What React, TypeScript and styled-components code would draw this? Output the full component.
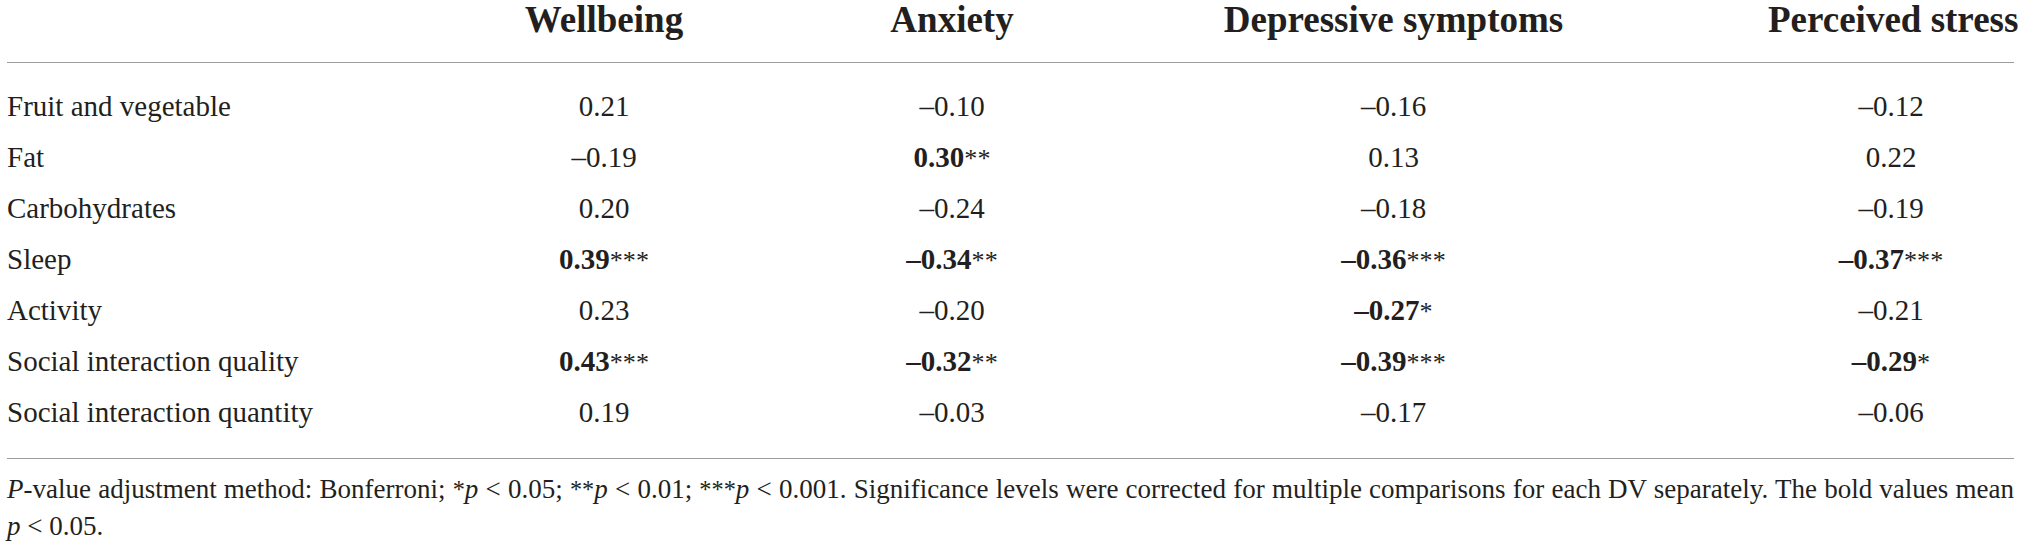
import React from "react";
import styled, { createGlobalStyle } from "styled-components";

const GlobalStyle = createGlobalStyle`
  html, body {
    margin: 0;
    padding: 0;
    background: #ffffff;
  }
`;

const COLUMNS = "316px 562px 134px 749px 246px";

const Page = styled.div`
  width: 2021px;
  box-sizing: border-box;
  padding: 0 7px;
  font-family: "Liberation Serif", "Times New Roman", serif;
  color: #231f20;
`;

const HeaderRow = styled.div`
  display: grid;
  grid-template-columns: ${COLUMNS};
  height: 63px;
  box-sizing: border-box;
  padding-bottom: 24px;
  border-bottom: 1px solid #9d9d9d;
`;

const HeadCell = styled.div<{ $label?: boolean }>`
  font-size: 37px;
  line-height: 39px;
  font-weight: 700;
  text-align: ${(p) => (p.$label ? "left" : "center")};
  white-space: nowrap;
`;

const Body = styled.div`
  padding: 18px 0 20px;
  border-bottom: 1px solid #9d9d9d;
`;

const Row = styled.div`
  display: grid;
  grid-template-columns: ${COLUMNS};
  height: 51px;
`;

const Cell = styled.div<{ $label?: boolean; $bold?: boolean }>`
  font-size: 29px;
  line-height: 51px;
  font-weight: ${(p) => (p.$bold ? 700 : 400)};
  text-align: ${(p) => (p.$label ? "left" : "center")};
  white-space: nowrap;
`;

const Stars = styled.span`
  font-weight: 400;
  font-size: 0.9em;
`;

const Footnote = styled.p`
  margin: 0;
  padding-top: 12px;
  font-size: 27px;
  line-height: 37px;
  text-align: justify;
`;

const Ital = styled.i`
  font-style: italic;
`;

const Sup = styled.span`
  font-size: 0.9em;
`;

type Val = { v: string; b?: boolean; s?: string };

const header = ["Wellbeing", "Anxiety", "Depressive symptoms", "Perceived stress"];

const rows: { label: string; vals: Val[] }[] = [
  { label: "Fruit and vegetable", vals: [{ v: "0.21" }, { v: "–0.10" }, { v: "–0.16" }, { v: "–0.12" }] },
  { label: "Fat", vals: [{ v: "–0.19" }, { v: "0.30", b: true, s: "**" }, { v: "0.13" }, { v: "0.22" }] },
  { label: "Carbohydrates", vals: [{ v: "0.20" }, { v: "–0.24" }, { v: "–0.18" }, { v: "–0.19" }] },
  {
    label: "Sleep",
    vals: [
      { v: "0.39", b: true, s: "***" },
      { v: "–0.34", b: true, s: "**" },
      { v: "–0.36", b: true, s: "***" },
      { v: "–0.37", b: true, s: "***" },
    ],
  },
  { label: "Activity", vals: [{ v: "0.23" }, { v: "–0.20" }, { v: "–0.27", b: true, s: "*" }, { v: "–0.21" }] },
  {
    label: "Social interaction quality",
    vals: [
      { v: "0.43", b: true, s: "***" },
      { v: "–0.32", b: true, s: "**" },
      { v: "–0.39", b: true, s: "***" },
      { v: "–0.29", b: true, s: "*" },
    ],
  },
  { label: "Social interaction quantity", vals: [{ v: "0.19" }, { v: "–0.03" }, { v: "–0.17" }, { v: "–0.06" }] },
];

export default function App() {
  return (
    <Page>
      <GlobalStyle />
      <HeaderRow>
        <HeadCell $label />
        {header.map((h) => (
          <HeadCell key={h}>{h}</HeadCell>
        ))}
      </HeaderRow>
      <Body>
        {rows.map((r) => (
          <Row key={r.label}>
            <Cell $label>{r.label}</Cell>
            {r.vals.map((c, i) => (
              <Cell key={i} $bold={c.b}>
                {c.v}
                {c.s && <Stars>{c.s}</Stars>}
              </Cell>
            ))}
          </Row>
        ))}
      </Body>
      <Footnote>
        <Ital>P</Ital>-value adjustment method: Bonferroni; <Sup>*</Sup>
        <Ital>p</Ital> &lt; 0.05; <Sup>**</Sup>
        <Ital>p</Ital> &lt; 0.01; <Sup>***</Sup>
        <Ital>p</Ital> &lt; 0.001. Significance levels were corrected for multiple comparisons for each DV
        separately. The bold values mean <Ital>p</Ital> &lt; 0.05.
      </Footnote>
    </Page>
  );
}
